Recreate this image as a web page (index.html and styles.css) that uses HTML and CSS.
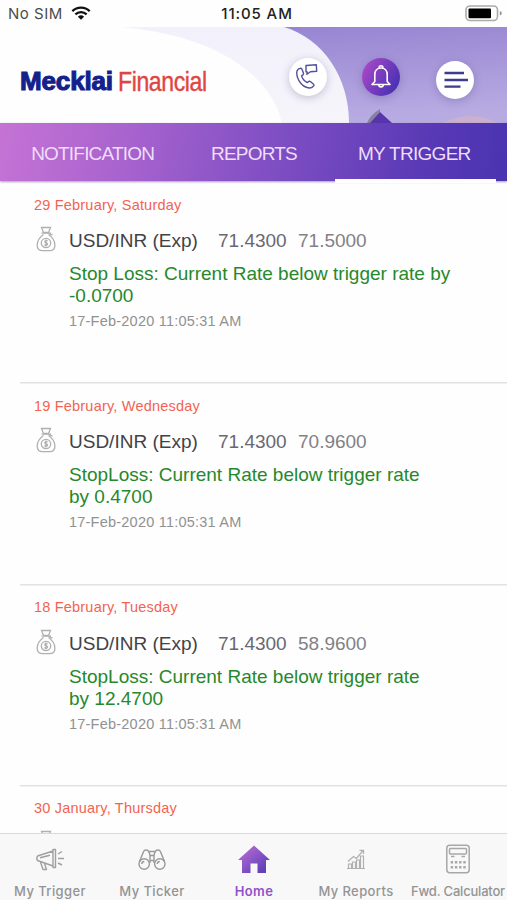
FILE: index.html
```html
<!DOCTYPE html>
<html lang="en">
<head>
<meta charset="utf-8">
<title>Mecklai Financial</title>
<link rel="stylesheet" href="styles.css">
</head>
<body>
<svg class="defs" width="0" height="0" aria-hidden="true">
  <symbol id="bag" viewBox="0 0 20 26">
    <g fill="none" stroke="#b0b0b0" stroke-width="1.3">
      <path d="M5.500 1.500h9l-2 5H7.500z"/><path d="M5.500 7.200h9.500M13 7.600l3.500 1.600"/>
      <path d="M7.500 8.500C4 11 1.200 15 1.200 19.200c0 3.800 2.300 5.500 5.500 5.500h7c3.200 0 5.200-1.700 5.200-5.500 0-4.200-2.800-8.200-6.400-10.700"/>
      <circle cx="10" cy="17" r="4.700"/>
      <path d="M11.600 15.200c-.8-1-3-.7-2.800.6.200 1.300 2.700.9 2.800 2.300.1 1.300-2.200 1.500-3.100.4M10 13.600v6.800"/>
    </g>
  </symbol>
</svg>
<div class="phone">
  <div class="status">
    <span class="carrier">No SIM</span>
    <svg class="wifi" width="20" height="14" viewBox="0 0 20 14"><g fill="none" stroke="#111" stroke-width="2.3"><path d="M1.300 5.200a12.500 12.500 0 0 1 17.400 0"/><path d="M4.400 8.400a8 8 0 0 1 11.200 0"/></g><path d="M6.900 10.700a4.500 4.500 0 0 1 6.200 0L10 13.800z" fill="#111"/></svg>
    <span class="clock">11:05 AM</span>
    <svg class="battery" width="38" height="18" viewBox="0 0 38 18"><rect x="1" y="1" width="31.500" height="14.500" rx="4" fill="#fff" stroke="#aaa" stroke-width="1.600"/><rect x="3.500" y="3.500" width="22.500" height="9.800" rx="1" fill="#000"/><path d="M34.800 6v4.500q2-.5 2-2.250T34.800 6z" fill="#999"/></svg>
  </div>
  <header class="header">
    <svg class="header-art" width="507" height="96" viewBox="0 0 507 96">
      <defs>
        <linearGradient id="sky" x1="0" y1="0" x2=".15" y2="1"><stop offset="0" stop-color="#9784d2"/><stop offset="1" stop-color="#b8abe2"/></linearGradient>
        <linearGradient id="pale" x1="0" y1="0" x2="0" y2="1"><stop offset="0" stop-color="#f2f0fa"/><stop offset="1" stop-color="#f6f5fb"/></linearGradient>
      </defs>
      <rect x="250" width="257" height="96" fill="url(#sky)"/>
      <path d="M0 0H284C324 12 349 51 349 96H0z" fill="url(#pale)"/>
      <path d="M0 0H122C209 8 269 43 282 96H0z" fill="#fefefe"/>
      <path d="M443 96q28-14 55 0z" fill="#cbb0cf"/>
      <path d="M367 96q3-8 13-14v3l-9 11z" fill="#88829b"/>
      <path d="M370 96l10-11 12 11z" fill="#5635ad"/>
    </svg>
    <div class="logo"><span class="logo-a">Mecklai</span><span class="logo-b">Financial</span></div>
    <div class="actions">
      <div class="round call"><svg width="38" height="38" viewBox="0 0 38 38"><g fill="none" stroke="#51519c" stroke-width="1.400" stroke-linejoin="round"><path d="M9.500 11l2.300-.8c.7 0 1 .3 1.200 1l1.500 4c.2.8 0 1.200-.6 1.700l-1.300 1c.8 3 2.900 5.300 5.600 6.700l1.700-1.200c.6-.3 1-.3 1.500.1l3.200 2.800c.6.500.5 1 .1 1.600-1 1.500-2.500 2.300-4.300 2.100C13.500 29.300 8 22.500 7.700 14.800c0-1.600.6-2.900 1.800-3.800z"/><path d="M17 7.500l10.300-.8.400 6.600-6.300.5-3.500 2.500.3-2.400-1.200-.1z"/></g></svg></div>
      <div class="round bell"><svg width="38" height="38" viewBox="0 0 38 38"><g fill="none" stroke="#fff" stroke-width="1.600" stroke-linejoin="round"><path d="M10 26.500h18l-2.800-3v-7c0-4-2.500-6.500-6.200-6.500s-6.200 2.500-6.200 6.500v7z"/><path d="M17.100 9.800c0-2.700 3.800-2.700 3.800 0M16.700 27c.4 2.500 4.200 2.500 4.600 0"/></g></svg></div>
      <div class="round menu"><svg width="38" height="38" viewBox="0 0 38 38"><path d="M8.500 12H28M8.500 19H32M8.500 25.700H24.500" stroke="#3d3c8f" stroke-width="2.300"/></svg></div>
    </div>
  </header>
  <nav class="tabs">
    <div class="tab"><span class="t1">NOTIFICATION</span></div>
    <div class="tab"><span class="t2">REPORTS</span></div>
    <div class="tab active"><span class="t3">MY TRIGGER</span></div>
  </nav>
  <main class="list">
    <section class="item">
      <div class="date">29 February, Saturday</div>
      <div class="row"><svg class="bag" width="20" height="26"><use href="#bag"/></svg><span class="pair">USD/INR (Exp)</span><span class="rate">71.4300</span><span class="rate target">71.5000</span></div>
      <p class="message">Stop Loss: Current Rate below trigger rate by<br>-0.0700</p>
      <div class="time">17-Feb-2020 11:05:31 AM</div>
    </section>
    <section class="item">
      <div class="date">19 February, Wednesday</div>
      <div class="row"><svg class="bag" width="20" height="26"><use href="#bag"/></svg><span class="pair">USD/INR (Exp)</span><span class="rate">71.4300</span><span class="rate target">70.9600</span></div>
      <p class="message">StopLoss: Current Rate below trigger rate<br>by 0.4700</p>
      <div class="time">17-Feb-2020 11:05:31 AM</div>
    </section>
    <section class="item">
      <div class="date">18 February, Tuesday</div>
      <div class="row"><svg class="bag" width="20" height="26"><use href="#bag"/></svg><span class="pair">USD/INR (Exp)</span><span class="rate">71.4300</span><span class="rate target">58.9600</span></div>
      <p class="message">StopLoss: Current Rate below trigger rate<br>by 12.4700</p>
      <div class="time">17-Feb-2020 11:05:31 AM</div>
    </section>
    <section class="item last">
      <div class="date">30 January, Thursday</div>
      <div class="row"><svg class="bag" width="20" height="26"><use href="#bag"/></svg></div>
    </section>
  </main>
  <footer class="bottom">
    <div class="nav-item"><svg width="32" height="32" viewBox="0 0 32 32"><g fill="none" stroke="#a0a0a0" stroke-width="1.400" stroke-linejoin="round"><path d="M3.500 13L19 8v15L3.500 17.500q-1.500-2 0-4.500zM19 6.500h2.500v18H19zM6.500 19l2.500 7.500h3.500l-2-6M6 14.800l10-2.500M24 15.500h6M24 11l4-2.500M24 20l4 2"/></g></svg><span class="label n1">My Trigger</span></div>
    <div class="nav-item"><svg width="32" height="32" viewBox="0 0 32 32"><g fill="none" stroke="#999" stroke-width="1.400"><circle cx="8.200" cy="21" r="5.200"/><circle cx="23.800" cy="21" r="5.200"/><path d="M3.500 18.500L7.500 8.800c.8-2.400 4.500-2.400 5.300 0L14 12v8M28.500 18.500L24.500 8.800c-.8-2.400-4.500-2.400-5.300 0L18 12v8M13 8.500h6M14 12.500h4M14 17.500h4M5.800 21a2.600 2.600 0 0 1 2.500-2.500M21.300 21a2.600 2.600 0 0 1 2.500-2.500"/></g></svg><span class="label n2">My Ticker</span></div>
    <div class="nav-item current"><svg width="32" height="32" viewBox="0 0 32 32"><defs><linearGradient id="home" x1="0" y1="0" x2="1" y2="1"><stop offset=".15" stop-color="#b169d2"/><stop offset=".85" stop-color="#6140b9"/></linearGradient></defs><path d="M16 2.500L0 17h4v13h8.500V20.500h7V30H28V17h4z" fill="url(#home)"/></svg><span class="label n3">Home</span></div>
    <div class="nav-item"><svg width="32" height="32" viewBox="0 0 32 32"><g fill="none" stroke="#b0b0b0" stroke-width="1.200"><path d="M7 25.500H25M8.500 25v-4h3v4M12.500 25v-6h3v6M16.500 25v-8h3v8M20.500 25V13h3v12M8 18.500l5.500-5 3 2L23 7.500M19.500 7.300H23.500V11"/></g></svg><span class="label n4">My Reports</span></div>
    <div class="nav-item"><svg width="32" height="32" viewBox="0 0 32 32"><g fill="none" stroke="#a8a8a8" stroke-width="1.500"><rect x="4.800" y="2.200" width="22.400" height="27.600" rx="3"/><rect x="7.500" y="5.500" width="17" height="5.500" rx="1"/><path d="M9 13.500h3.500M19.500 13.500H23"/><path d="M8.700 19.300H24M8.700 24.300H24" stroke-width="2.600" stroke-dasharray="2.400 1.800"/></g></svg><span class="label n5">Fwd. Calculator</span></div>
  </footer>
</div>
</body>
</html>
```
FILE: styles.css
```css
* { box-sizing: border-box; }
body { margin: 0; background: #fefefe; font-family: "Liberation Sans", Arial, sans-serif; }
.defs { position: absolute; }
.phone { display: flex; flex-direction: column; width: 507px; height: 900px; overflow: hidden; }
.status { position: relative; flex: none; height: 27px; display: flex; align-items: center; padding: 0 5px 0 8px; font-family: Inter, sans-serif; color: #4c4c4c; }
.carrier { font-size: 15px; letter-spacing: .5px; }
.wifi { margin-left: 8px; margin-top: -2px; }
.clock { position: absolute; left: 0; right: 0; top: 4px; text-align: center; font-size: 15px; line-height: 19px; font-weight: 500; letter-spacing: .9px; color: #222; padding-left: 7px; }
.battery { margin-left: auto; margin-right: -1px; }
.header { position: relative; flex: none; height: 96px; display: flex; justify-content: space-between; }
.header-art { position: absolute; left: 0; top: 0; }
.logo { position: relative; display: flex; gap: 5px; margin: 37px 0 0 20px; line-height: 34px; white-space: nowrap; }
.logo-a { width: 93px; font-size: 26px; font-weight: 700; color: #14218b; letter-spacing: -.15px; -webkit-text-stroke: 1.1px #14218b; }
.logo-b { width: 88px; font-size: 28.5px; color: #df4641; letter-spacing: -.5px; -webkit-text-stroke: .4px #df4641; transform: scaleX(.81); transform-origin: 0 50%; }
.actions { position: relative; display: flex; gap: 35px; margin: 31px 33px 0 0; }
.round { width: 38px; height: 38px; border-radius: 50%; background: #fff; box-shadow: 0 2px 8px rgba(70, 60, 120, .28); }
.bell { background: linear-gradient(120deg, #b34acb, #4b32b3 85%); }
.menu { margin: 3px 0 0 1px; }
.tabs { position: relative; z-index: 1; flex: none; height: 58px; display: flex; padding: 0 11px 0 12px; background: linear-gradient(100deg, #c573d5 0%, #a863ce 25%, #7e4ec3 55%, #5738b5 85%, #4a34b0 100%); box-shadow: 0 1px 2px rgba(80, 60, 120, .5); }
.tab { flex: 1; height: 59px; text-align: center; font-size: 19px; line-height: 61px; color: #efddfa; border-bottom: 0 solid #fefefe; white-space: nowrap; }
.tab.active { border-bottom-width: 4px; height: 60px; }
.t1 { letter-spacing: -.8px; }
.t2 { letter-spacing: -.8px; }
.t3 { letter-spacing: -.7px; margin-left: -2px; }
.list { flex: 1; min-height: 0; overflow: hidden; padding-left: 20px; }
.item { height: 201.3px; padding: 13.5px 0 0 14px; }
.item:not(.last) { box-shadow: 0 1.5px 0 #e2e2e4; }
.date { font-size: 14.5px; line-height: 20px; color: #f36352; letter-spacing: .2px; }
.row { display: flex; height: 26px; margin-top: 11.5px; line-height: 30px; font-size: 19px; }
.bag { margin-left: 2px; margin-top: 0; }
.pair { width: 149px; margin-left: 13px; color: #424246; }
.rate { width: 80px; color: #686873; }
.rate.target { color: #818187; }
.message { margin: 11px 0 0 35px; font-size: 19px; line-height: 22px; color: #26882b; white-space: nowrap; }
.time { margin: 6px 0 0 35px; font-size: 14.5px; line-height: 17px; color: #919191; letter-spacing: .22px; }
.bottom { flex: none; height: 67px; display: grid; grid-template-columns: repeat(5, 102px); margin-left: -1px; background: #f8f8f8; border-top: 1.5px solid #dadada; }
.nav-item { display: flex; flex-direction: column; align-items: center; padding-top: 9px; color: #949494; }
.label { font-family: Inter, sans-serif; font-size: 13px; line-height: 16px; margin-top: 8px; font-weight: 500; letter-spacing: .4px; white-space: nowrap; }
.current { color: #9252c9; }
.n3 { font-weight: 600; }
.n5 { letter-spacing: -.2px; }
```
